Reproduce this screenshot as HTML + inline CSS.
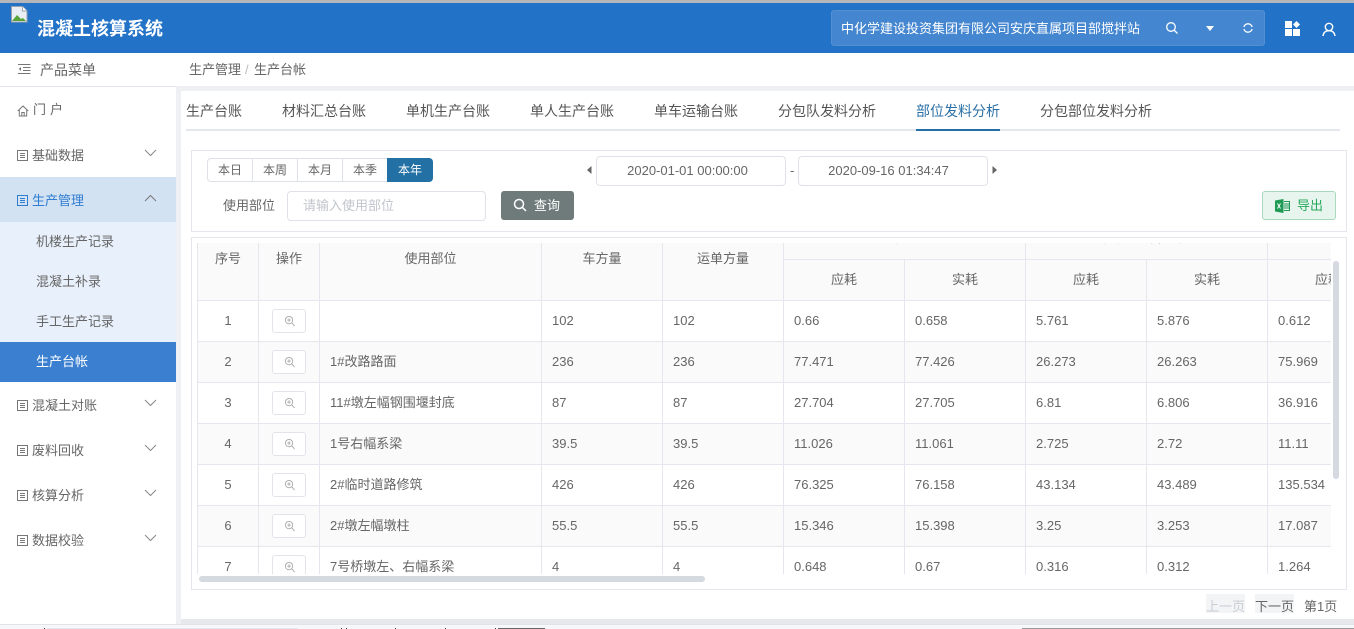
<!DOCTYPE html>
<html lang="zh-CN">
<head>
<meta charset="utf-8">
<title>混凝土核算系统</title>
<style>
*{box-sizing:border-box}
html,body{margin:0;padding:0;width:1354px;height:629px;overflow:hidden;background:#fff}
body{position:relative;font-family:"Liberation Sans","Noto Sans CJK SC",sans-serif;font-size:13px;color:#666}
.a{position:absolute;white-space:nowrap}
.menu{position:absolute;left:0;width:176px;height:20px;line-height:20px}
.menu span{position:absolute;left:32px;top:1px}
.menu svg.i{position:absolute;left:17px;top:5px}
.menu svg.c{position:absolute;left:144px;top:4px}
.sub{position:absolute;left:0;width:176px;height:40px;line-height:40px;padding-left:36px}
.tab{position:absolute;top:101px;font-size:14px;line-height:20px;color:#555;white-space:nowrap}
.seg{position:absolute;top:158px;width:46px;height:24px;line-height:23px;text-align:center;font-size:12px;border:1px solid #dfe1e8;background:#fff}
.inp{position:absolute;background:#fff;border:1px solid #e0e2ea;border-radius:4px;text-align:center}
table{position:absolute;left:0;top:-17px;border-collapse:separate;border-spacing:0;table-layout:fixed;width:1192px}
th,td{font-weight:normal;font-size:13px;line-height:20px;border-right:1px solid #e5e6ee;border-bottom:1px solid #e5e6ee;padding:0 0 0 10px;height:41px;overflow:hidden;white-space:nowrap;text-align:left;color:#666}
th{background:#fafafa;text-align:center;padding:0}
th.r{vertical-align:top;padding-top:23px}
th.g{height:34px;vertical-align:top;padding-top:2px}
td.f,th.f{border-left:1px solid #e5e6ee}
td.m{text-align:center;padding:0}
tr.z td{background:#fafafa}
.b{display:block;margin:0 auto;width:34px;height:24px;border:1px solid #e2e4ea;border-radius:3px;background:#fff;position:relative}
.b svg{position:absolute;left:11px;top:5px}
</style>
</head>
<body>
<!-- top -->
<div class="a" style="left:0;top:0;width:1354px;height:3px;background:#b4b6b9"></div>
<div class="a" style="left:0;top:3px;width:1354px;height:50px;background:#2272c8"></div>
<svg class="a" style="left:11px;top:6px" width="17" height="17" viewBox="0 0 17 17"><path d="M.5.5h11l4.500 4.500v11H.5z" fill="#e8eef4" stroke="#9aa3ad"/><path d="M1 15l5-6 4 4 2-1 3 3z" fill="#5aa33a"/><path d="M11.500.5v4.500h4.500" fill="#fff" stroke="#9aa3ad"/></svg>
<div class="a" style="left:37px;top:17px;font-size:18px;line-height:25px;font-weight:bold;color:#fff">混凝土核算系统</div>
<div class="a" style="left:831px;top:10px;width:434px;height:36px;background:#4486cf;border:1px solid #5290d2;border-radius:3px"></div>
<div class="a" style="left:841px;top:19px;line-height:20px;color:#fff">中化学建设投资集团有限公司安庆直属项目部搅拌站</div>
<svg class="a" style="left:1165px;top:21px" width="14" height="14" viewBox="0 0 14 14" fill="none" stroke="#fff" stroke-width="1.300"><circle cx="6" cy="6" r="4.300"/><path d="M9.200 9.200l3.300 3.300"/></svg>
<svg class="a" style="left:1205px;top:26px" width="10" height="6" viewBox="0 0 10 6"><path d="M1 0h8L5 5z" fill="#fff"/></svg>
<svg class="a" style="left:1242px;top:22px" width="12" height="12" viewBox="0 0 12 12" fill="none" stroke="#fff" stroke-width="1.300"><circle cx="6" cy="6" r="4.200" stroke-dasharray="11 2.200" stroke-dashoffset="-1"/></svg>
<svg class="a" style="left:1285px;top:21px" width="16" height="16" viewBox="0 0 16 16" fill="#fff"><rect x="0" y="0" width="7" height="7"/><rect x="0" y="8" width="7" height="7"/><rect x="8" y="8" width="7" height="7"/><path d="M11.500 0l3.500 3.500-3.500 3.500L8 3.500z"/></svg>
<svg class="a" style="left:1322px;top:22px" width="14" height="15" viewBox="0 0 14 15" fill="none" stroke="#fff" stroke-width="1.400"><circle cx="7" cy="5" r="3.700"/><path d="M1 14c.5-3.500 2.500-5.300 6-5.300s5.500 1.800 6 5.300"/></svg>

<!-- sub header -->
<svg class="a" style="left:18px;top:63px" width="13" height="12" viewBox="0 0 13 12" fill="none" stroke="#777"><path d="M0 1.500h12.500M5 4.500h7.500M5 7.500h7.500M0 10.500h12.500"/><path d="M3 4L.7 6 3 8z" fill="#777" stroke="none"/></svg>
<div class="a" style="left:40px;top:60px;font-size:14px;line-height:20px">产品菜单</div>
<div class="a" style="left:189px;top:60px;line-height:20px">生产管理</div>
<div class="a" style="left:245px;top:60px;line-height:20px;color:#bbb">/</div>
<div class="a" style="left:254px;top:60px;line-height:20px">生产台帐</div>

<!-- gutters -->
<div class="a" style="left:0;top:86px;width:176px;height:1px;background:#e4e5ee"></div>
<div class="a" style="left:176px;top:86px;width:1178px;height:5px;background:#eef0f4"></div>
<div class="a" style="left:176px;top:86px;width:5px;height:538px;background:#eef0f4"></div>
<div class="a" style="left:181px;top:619px;width:1173px;height:5px;background:#e7e8eb"></div>
<div class="a" style="left:0;top:624px;width:1354px;height:1px;background:#e2e3e6"></div>
<div class="a" style="left:0;top:625px;width:1354px;height:4px;background:#f5f7fa"></div>
<div class="a" style="left:47px;top:628px;width:251px;height:1px;background:#e4e7ef"></div>
<div class="a" style="left:44px;top:628px;width:1px;height:1px;background:#444"></div>
<div class="a" style="left:341px;top:628px;width:1px;height:1px;background:#444"></div>
<div class="a" style="left:346px;top:628px;width:1px;height:1px;background:#444"></div>
<div class="a" style="left:395px;top:628px;width:1px;height:1px;background:#444"></div>
<div class="a" style="left:445px;top:628px;width:1px;height:1px;background:#444"></div>
<div class="a" style="left:495px;top:628px;width:1px;height:1px;background:#444"></div>
<div class="a" style="left:498px;top:628px;width:47px;height:1px;background:#666"></div>
<div class="a" style="left:1022px;top:628px;width:332px;height:1px;background:#999"></div>

<!-- sidebar -->
<div class="menu" style="top:100px"><svg class="i" width="12" height="12" viewBox="0 0 12 12" fill="none" stroke="#777"><path d="M.8 6L6 1l5.200 5M2.300 5v6h7.400V5M4.800 11V7.500h2.400V11"/></svg><span style="left:33px;letter-spacing:4px;top:0">门户</span></div>
<div class="a" style="left:0;top:177px;width:176px;height:45px;background:#d3e2f3"></div>
<div class="a" style="left:0;top:222px;width:176px;height:120px;background:#e8f0fb"></div>
<div class="a" style="left:0;top:342px;width:176px;height:40px;background:#3a7fd0"></div>

<div class="menu" style="top:145px"><svg class="i" width="11" height="11" viewBox="0 0 11 11" fill="none" stroke="#777"><rect x=".5" y=".5" width="10" height="10"/><path d="M3 3.500h5M3 5.500h5M3 7.500h5"/></svg><span>基础数据</span><svg class="c" width="13" height="8" viewBox="0 0 13 8" fill="none" stroke="#888"><path d="M1 1l5.500 5.500L12 1"/></svg></div>
<div class="menu" style="top:190px;color:#2f7dd0"><svg class="i" width="11" height="11" viewBox="0 0 11 11" fill="none" stroke="#2f7dd0"><rect x=".5" y=".5" width="10" height="10"/><path d="M3 3.500h5M3 5.500h5M3 7.500h5"/></svg><span>生产管理</span><svg class="c" width="13" height="8" viewBox="0 0 13 8" fill="none" stroke="#777"><path d="M1 7l5.500-5.500L12 7"/></svg></div>
<div class="sub" style="top:222px">机楼生产记录</div>
<div class="sub" style="top:262px">混凝土补录</div>
<div class="sub" style="top:302px">手工生产记录</div>
<div class="sub" style="top:342px;color:#fff">生产台帐</div>
<div class="menu" style="top:395px"><svg class="i" width="11" height="11" viewBox="0 0 11 11" fill="none" stroke="#777"><rect x=".5" y=".5" width="10" height="10"/><path d="M3 3.500h5M3 5.500h5M3 7.500h5"/></svg><span>混凝土对账</span><svg class="c" width="13" height="8" viewBox="0 0 13 8" fill="none" stroke="#888"><path d="M1 1l5.500 5.500L12 1"/></svg></div>
<div class="menu" style="top:440px"><svg class="i" width="11" height="11" viewBox="0 0 11 11" fill="none" stroke="#777"><rect x=".5" y=".5" width="10" height="10"/><path d="M3 3.500h5M3 5.500h5M3 7.500h5"/></svg><span>废料回收</span><svg class="c" width="13" height="8" viewBox="0 0 13 8" fill="none" stroke="#888"><path d="M1 1l5.500 5.500L12 1"/></svg></div>
<div class="menu" style="top:485px"><svg class="i" width="11" height="11" viewBox="0 0 11 11" fill="none" stroke="#777"><rect x=".5" y=".5" width="10" height="10"/><path d="M3 3.500h5M3 5.500h5M3 7.500h5"/></svg><span>核算分析</span><svg class="c" width="13" height="8" viewBox="0 0 13 8" fill="none" stroke="#888"><path d="M1 1l5.500 5.500L12 1"/></svg></div>
<div class="menu" style="top:530px"><svg class="i" width="11" height="11" viewBox="0 0 11 11" fill="none" stroke="#777"><rect x=".5" y=".5" width="10" height="10"/><path d="M3 3.500h5M3 5.500h5M3 7.500h5"/></svg><span>数据校验</span><svg class="c" width="13" height="8" viewBox="0 0 13 8" fill="none" stroke="#888"><path d="M1 1l5.500 5.500L12 1"/></svg></div>

<!-- tabs -->
<div class="tab" style="left:186px">生产台账</div>
<div class="tab" style="left:282px">材料汇总台账</div>
<div class="tab" style="left:406px">单机生产台账</div>
<div class="tab" style="left:530px">单人生产台账</div>
<div class="tab" style="left:654px">单车运输台账</div>
<div class="tab" style="left:778px">分包队发料分析</div>
<div class="tab" style="left:916px;color:#2a6fa5">部位发料分析</div>
<div class="tab" style="left:1040px">分包部位发料分析</div>
<div class="a" style="left:186px;top:129px;width:1154px;height:2px;background:#e4e7ed"></div>
<div class="a" style="left:916px;top:129px;width:84px;height:2px;background:#2370a8"></div>

<!-- filter box -->
<div class="a" style="left:191px;top:150px;width:1156px;height:82px;border:1px solid #e6e7ee"></div>
<div class="seg" style="left:207px;border-radius:4px 0 0 4px">本日</div>
<div class="seg" style="left:252px">本周</div>
<div class="seg" style="left:297px">本月</div>
<div class="seg" style="left:342px">本季</div>
<div class="seg" style="left:387px;border:0;background:#2370a4;color:#fff;line-height:24px;border-radius:0 4px 4px 0">本年</div>
<svg class="a" style="left:587px;top:166px" width="5" height="8" viewBox="0 0 5 8"><path d="M4.500 0v8L0 4z" fill="#666"/></svg>
<div class="inp" style="left:596px;top:156px;width:190px;height:30px;line-height:28px;padding-right:7px">2020-01-01 00:00:00</div>
<div class="a" style="left:790px;top:161px;line-height:20px">-</div>
<div class="inp" style="left:798px;top:156px;width:190px;height:30px;line-height:28px;padding-right:9px">2020-09-16 01:34:47</div>
<svg class="a" style="left:992px;top:166px" width="5" height="8" viewBox="0 0 5 8"><path d="M.5 0v8L5 4z" fill="#666"/></svg>
<div class="a" style="left:223px;top:196px;line-height:20px">使用部位</div>
<div class="inp" style="left:287px;top:191px;width:199px;height:30px;line-height:28px;text-align:left;padding-left:15px;color:#c0c4cc">请输入使用部位</div>
<div class="a" style="left:501px;top:191px;width:73px;height:29px;background:#6e7b7a;border-radius:3px"></div>
<svg class="a" style="left:513px;top:198px" width="14" height="14" viewBox="0 0 14 14" fill="none" stroke="#fff" stroke-width="1.500"><circle cx="6" cy="6" r="4.500"/><path d="M9.300 9.300l3.700 3.700"/></svg>
<div class="a" style="left:534px;top:196px;line-height:20px;color:#fff">查询</div>
<div class="a" style="left:1262px;top:191px;width:74px;height:29px;background:#e8f5ee;border:1px solid #a8d9bd;border-radius:3px"></div>
<svg class="a" style="left:1275px;top:199px" width="15" height="14" viewBox="0 0 15 14"><path d="M0 1.500L8.500 0v14L0 12.500z" fill="#1e9a55"/><path d="M9 2.500h5.500v9H9" fill="none" stroke="#1e9a55"/><path d="M9 5h5M9 7h5M9 9h5" stroke="#1e9a55"/><path d="M2.500 4.500l3 5M5.500 4.500l-3 5" stroke="#fff"/></svg>
<div class="a" style="left:1297px;top:196px;line-height:20px;color:#27a95f">导出</div>

<!-- table box -->
<div class="a" style="left:191px;top:237px;width:1156px;height:353px;border:1px solid #e6e7ee"></div>
<div class="a" style="left:197px;top:243px;width:1134px;height:331px;overflow:hidden">
<table>
<colgroup><col style="width:62px"><col style="width:61px"><col style="width:222px"><col style="width:121px"><col style="width:121px"><col style="width:121px"><col style="width:121px"><col style="width:121px"><col style="width:121px"><col style="width:121px"></colgroup>
<thead>
<tr><th class="r f" rowspan="2">序号</th><th class="r" rowspan="2">操作</th><th class="r" rowspan="2">使用部位</th><th class="r" rowspan="2">车方量</th><th class="r" rowspan="2">运单方量</th><th class="g" colspan="2">水泥</th><th class="g" colspan="2">机制砂（中砂）</th><th class="g"></th></tr>
<tr><th>应耗</th><th>实耗</th><th>应耗</th><th>实耗</th><th>应耗</th></tr>
</thead>
<tbody>
<tr><td class="m f">1</td><td class="m"><span class="b"><svg width="11" height="12" viewBox="0 0 12 13" fill="none" stroke="#aaa"><circle cx="5.500" cy="5.500" r="4"/><path d="M8.500 8.500l3 3.500M3.500 5.500h4M5.500 3.500v4"/></svg></span></td><td></td><td>102</td><td>102</td><td>0.66</td><td>0.658</td><td>5.761</td><td>5.876</td><td>0.612</td></tr>
<tr class="z"><td class="m f">2</td><td class="m"><span class="b"><svg width="11" height="12" viewBox="0 0 12 13" fill="none" stroke="#aaa"><circle cx="5.500" cy="5.500" r="4"/><path d="M8.500 8.500l3 3.500M3.500 5.500h4M5.500 3.500v4"/></svg></span></td><td>1#改路路面</td><td>236</td><td>236</td><td>77.471</td><td>77.426</td><td>26.273</td><td>26.263</td><td>75.969</td></tr>
<tr><td class="m f">3</td><td class="m"><span class="b"><svg width="11" height="12" viewBox="0 0 12 13" fill="none" stroke="#aaa"><circle cx="5.500" cy="5.500" r="4"/><path d="M8.500 8.500l3 3.500M3.500 5.500h4M5.500 3.500v4"/></svg></span></td><td>11#墩左幅钢围堰封底</td><td>87</td><td>87</td><td>27.704</td><td>27.705</td><td>6.81</td><td>6.806</td><td>36.916</td></tr>
<tr class="z"><td class="m f">4</td><td class="m"><span class="b"><svg width="11" height="12" viewBox="0 0 12 13" fill="none" stroke="#aaa"><circle cx="5.500" cy="5.500" r="4"/><path d="M8.500 8.500l3 3.500M3.500 5.500h4M5.500 3.500v4"/></svg></span></td><td>1号右幅系梁</td><td>39.5</td><td>39.5</td><td>11.026</td><td>11.061</td><td>2.725</td><td>2.72</td><td>11.11</td></tr>
<tr><td class="m f">5</td><td class="m"><span class="b"><svg width="11" height="12" viewBox="0 0 12 13" fill="none" stroke="#aaa"><circle cx="5.500" cy="5.500" r="4"/><path d="M8.500 8.500l3 3.500M3.500 5.500h4M5.500 3.500v4"/></svg></span></td><td>2#临时道路修筑</td><td>426</td><td>426</td><td>76.325</td><td>76.158</td><td>43.134</td><td>43.489</td><td>135.534</td></tr>
<tr class="z"><td class="m f">6</td><td class="m"><span class="b"><svg width="11" height="12" viewBox="0 0 12 13" fill="none" stroke="#aaa"><circle cx="5.500" cy="5.500" r="4"/><path d="M8.500 8.500l3 3.500M3.500 5.500h4M5.500 3.500v4"/></svg></span></td><td>2#墩左幅墩柱</td><td>55.5</td><td>55.5</td><td>15.346</td><td>15.398</td><td>3.25</td><td>3.253</td><td>17.087</td></tr>
<tr><td class="m f">7</td><td class="m"><span class="b"><svg width="11" height="12" viewBox="0 0 12 13" fill="none" stroke="#aaa"><circle cx="5.500" cy="5.500" r="4"/><path d="M8.500 8.500l3 3.500M3.500 5.500h4M5.500 3.500v4"/></svg></span></td><td>7号桥墩左、右幅系梁</td><td>4</td><td>4</td><td>0.648</td><td>0.67</td><td>0.316</td><td>0.312</td><td>1.264</td></tr>
</tbody>
</table>
</div>
<div class="a" style="left:199px;top:576px;width:506px;height:6px;border-radius:3px;background:#d5d9e0"></div>
<div class="a" style="left:1333px;top:261px;width:6px;height:218px;border-radius:3px;background:#d5d9e0"></div>

<!-- pagination -->
<div class="a" style="left:1206px;top:594px;width:39px;height:19px;background:#f2f4f5"></div>
<div class="a" style="left:1255px;top:594px;width:39px;height:19px;background:#f2f4f5"></div>
<div class="a" style="left:1206px;top:597px;line-height:20px;color:#c8cdd3">上一页</div>
<div class="a" style="left:1255px;top:597px;line-height:20px">下一页</div>
<div class="a" style="left:1304px;top:597px;line-height:20px">第1页</div>
</body>
</html>
